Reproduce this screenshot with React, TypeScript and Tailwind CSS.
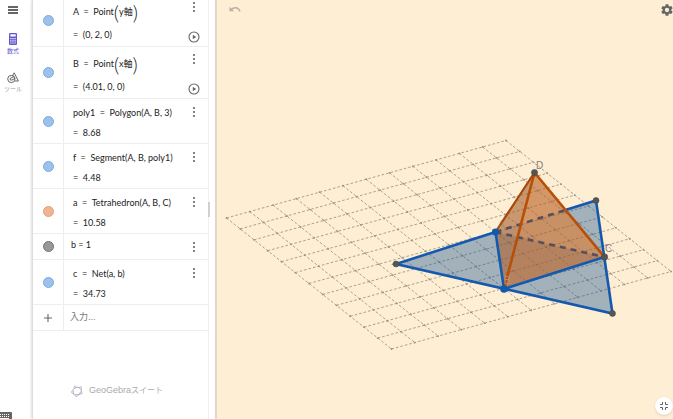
import type { ReactNode } from "react";
import clsx from "clsx";

type Row = {
	id: string;
	definition: ReactNode;
	value?: string;
	marble: string;
	tall?: boolean;
};

const BLUE = "bg-[#9bc2ea] border-[#7fabdc]";
const ORANGE = "bg-[#f0b492] border-[#e3a17c]";
const GRAY = "bg-[#989898] border-[#747474]";

function AxisPoint({ name, axis }: { name: string; axis: string }) {
	return (
		<span className="flex items-center whitespace-pre">
			<span>{name}  =  Point</span>
			<span className="text-xl leading-5 font-light">(</span>
			<span>{axis}</span>
			<span className="text-xl leading-5 font-light">)</span>
		</span>
	);
}

const rows: Row[] = [
	{ id: "A", definition: <AxisPoint name="A" axis="y軸" />, value: "(0, 2, 0)", marble: BLUE, tall: true },
	{ id: "B", definition: <AxisPoint name="B" axis="x軸" />, value: "(4.01, 0, 0)", marble: BLUE, tall: true },
	{ id: "poly1", definition: "poly1  =  Polygon(A, B, 3)", value: "8.68", marble: BLUE },
	{ id: "f", definition: "f  =  Segment(A, B, poly1)", value: "4.48", marble: BLUE },
	{ id: "a", definition: "a  =  Tetrahedron(A, B, C)", value: "10.58", marble: ORANGE },
	{ id: "b", definition: "b = 1", marble: GRAY },
	{ id: "c", definition: "c  =  Net(a, b)", value: "34.73", marble: BLUE },
];

function MoreIcon() {
	return (
		<svg width="4" height="12" viewBox="0 0 4 12" fill="#666">
			<circle cx="2" cy="2" r="1.1" />
			<circle cx="2" cy="6" r="1.1" />
			<circle cx="2" cy="10" r="1.1" />
		</svg>
	);
}

function PlayIcon() {
	return (
		<svg width="12" height="12" viewBox="0 0 12 12">
			<circle cx="6" cy="6" r="5" fill="none" stroke="#666" strokeWidth="1.1" />
			<path d="M4.8 3.7 8.2 6 4.8 8.3Z" fill="#666" />
		</svg>
	);
}

function AlgebraRow({ row }: { row: Row }) {
	return (
		<li
			className={clsx(
				"flex border-b border-[#eee]",
				row.tall ? "h-[52px]" : row.value ? "h-[45px]" : "h-[26px]"
			)}
		>
			<div className="flex w-[31px] shrink-0 items-center justify-center border-r border-[#eee]">
				<button aria-label={`${row.id} の表示切替`} className={clsx("size-[11px] rounded-full border", row.marble)} />
			</div>
			<div
				className={clsx(
					"flex min-w-0 grow flex-col whitespace-pre",
					row.value ? "pl-[9px]" : "pl-[7px]",
					row.tall ? "pt-[5px]" : row.value ? "pt-1" : "pt-px"
				)}
			>
				<div className={clsx("flex items-center", row.tall ? "h-6" : "h-5")}>{row.definition}</div>
				{row.value && (
					<div className={clsx("flex items-center", row.tall ? "h-[22px]" : "h-5")}>{`=  ${row.value}`}</div>
				)}
			</div>
			<div
				className={clsx(
					"flex w-7 shrink-0 flex-col items-center",
					row.tall ? "gap-[18px] pt-1.5" : "pt-[7px]"
				)}
			>
				<button aria-label="メニュー">
					<MoreIcon />
				</button>
				{row.tall && (
					<button aria-label="再生">
						<PlayIcon />
					</button>
				)}
			</div>
		</li>
	);
}

function Sidebar() {
	return (
		<nav className="flex w-8 shrink-0 flex-col bg-white">
			<div className="flex grow flex-col items-center pr-1.5 pt-1.5">
				<button aria-label="メニュー">
					<svg width="10" height="8" viewBox="0 0 10 8" stroke="#333" strokeWidth="1.4">
						<path d="M0 1h10M0 4h10M0 7h10" />
					</svg>
				</button>
				<button className="mt-[19px] flex flex-col items-center text-[#6557d2]">
					<svg width="8" height="12" viewBox="0 0 8 12">
						<rect width="8" height="12" rx="1" fill="currentColor" />
						<path d="M1.3 1.3h5.4v2.2H1.3z" fill="#fff" />
						<path
							d="M1.3 5h1.2v1.2H1.3zM3.4 5h1.2v1.2H3.4zM5.5 5h1.2v1.2H5.5zM1.3 7.2h1.2v1.2H1.3zM3.4 7.2h1.2v1.2H3.4zM5.5 7.2h1.2v1.2H5.5zM1.3 9.4h1.2v1.2H1.3zM3.4 9.4h1.2v1.2H3.4zM5.5 9.4h1.2v1.2H5.5z"
							fill="#fff"
						/>
					</svg>
					<span className="mt-0.5 text-[6px] leading-2">数式</span>
				</button>
				<button className="mt-[17px] flex flex-col items-center text-[#999]">
					<svg width="12" height="12" viewBox="0 0 12 12" fill="none" stroke="#666" strokeWidth="1">
						<circle cx="4.3" cy="7" r="3.6" />
						<path d="M7.2.8 11.4 9H7.9M7.2.8 5.4 4M3.3 8V6.3L7.4 4.4M3.3 8H5L8.4 6.2" />
					</svg>
					<span className="mt-px text-[6px] leading-2">ツール</span>
				</button>
			</div>
			<button aria-label="キーボード" className="h-[7px] w-3">
				<svg width="12" height="7" viewBox="0 0 12 7">
					<path d="M0 0h11q1 0 1 1v6H0z" fill="#666" />
					<path d="M0 2h1v1H0zM2 2h1v1H2zM4 2h1v1H4zM6 2h1v1H6zM8 2h1v1H8zM0 4h1v1H0zM2 4h1v1H2zM4 4h1v1H4zM6 4h1v1H6zM8 4h1v1H8zM0 6h9v1H0z" fill="#fff" />
				</svg>
			</button>
		</nav>
	);
}

function AlgebraView() {
	return (
		<section className="relative z-10 flex w-[183px] shrink-0 flex-col overflow-hidden border-l border-[#ddd] bg-white pr-1.5 shadow-[-1px_0_2px_rgba(0,0,0,0.12)]">
			<ul className="-mt-[5px] border-r border-[#f0f0f0] font-['Lato','Noto_Sans_CJK_JP',sans-serif] text-[9px] text-[#222]">
				{rows.map((row) => (
					<AlgebraRow key={row.id} row={row} />
				))}
			</ul>
			<div className="flex h-[26px] border-r border-b border-[#eee]">
				<button aria-label="追加" className="flex w-[31px] shrink-0 items-center justify-center border-r border-[#eee]">
					<svg width="8" height="8" viewBox="0 0 8 8" stroke="#666" strokeWidth="1.1">
						<path d="M4 0v8M0 4h8" />
					</svg>
				</button>
				<input
					aria-label="入力"
					placeholder="入力..."
					className="min-w-0 grow pl-1.5 text-[9px] outline-none placeholder:text-[#777]"
				/>
			</div>
			<div className="flex grow items-end border-r border-[#f0f0f0] pb-5 pl-[38px]">
				<button className="flex items-center gap-1.5 text-[9px] leading-4 text-[#aaa]">
					<svg width="12" height="12" viewBox="0 0 12 12" stroke="#aaabb8">
						<ellipse cx="6" cy="6.2" rx="4.4" ry="3.8" fill="none" strokeWidth="1" transform="rotate(-20 6 6)" />
						<g fill="#fff" strokeWidth=".8">
							<circle cx="4" cy="2.2" r="1.1" />
							<circle cx="9.6" cy="2.7" r="1.1" />
							<circle cx="1.6" cy="7" r="1.1" />
							<circle cx="10" cy="8" r="1.1" />
							<circle cx="5.2" cy="10.4" r="1.1" />
						</g>
					</svg>
					<span>
						GeoGebra<span className="text-[8px]">スイート</span>
					</span>
				</button>
			</div>
			<div className="absolute top-[202px] right-[5px] h-[15px] w-0.5 bg-[#d0d0d0]" />
		</section>
	);
}

const CELLS = 12;
const LEFT = [226.5, 218];
const TOP = [506, 140.5];
const BOTTOM = [391.5, 349];

function gridPoint(u: number, v: number) {
	return [
		LEFT[0] + ((TOP[0] - LEFT[0]) * u + (BOTTOM[0] - LEFT[0]) * v) / CELLS,
		LEFT[1] + ((TOP[1] - LEFT[1]) * u + (BOTTOM[1] - LEFT[1]) * v) / CELLS,
	];
}

const steps = Array.from({ length: CELLS + 1 }, (_, i) => i);
const gridPath = steps
	.map((i) => `M${gridPoint(i, 0)}L${gridPoint(i, CELLS)}M${gridPoint(0, i)}L${gridPoint(CELLS, i)}`)
	.join("");

function Scene() {
	return (
		<svg
			className="block h-full w-full font-['Liberation_Sans',sans-serif]"
			viewBox="217 0 456 419"
			role="img"
			aria-label="正四面体と展開図"
		>
			<path d={gridPath} fill="none" stroke="#aaa18f" strokeWidth="1" strokeDasharray="2.6 2" />
			<g fill="#999181">
				{steps.map((u) =>
					steps.map((v) => {
						const [x, y] = gridPoint(u, v);
						return <circle key={`${u}-${v}`} cx={x} cy={y} r=".9" />;
					})
				)}
			</g>

			{/* net */}
			<g fill="#1c5597" fillOpacity=".4">
				<path d="M396 264 495.5 232 504 289Z" />
				<path d="M504 289 604.5 257 612.5 313.5Z" />
				<path d="M565.2 210 596 200.5 604.5 257Z" />
				<path d="M495.5 232 565.2 210 604.5 257Z" fillOpacity=".12" />
				<path d="M495.5 232 604.5 257 504 289Z" fillOpacity=".34" />
			</g>

			{/* tetrahedron */}
			<path d="M534.5 172.5 495.5 232 504 289Z" fill="#a0531f" fillOpacity=".56" />
			<path d="M534.5 172.5 504 289 604.5 257Z" fill="#b55d20" fillOpacity=".6" />

			<g fill="none" stroke="#1359ae" strokeWidth="2.6" strokeLinecap="round">
				<path d="M495.5 232 396 264 612.5 313.5 596 200.5 567 209.6" />
				<path d="M495.5 232 504 289 604.5 257" />
			</g>
			<g fill="none" stroke="#574f60" strokeWidth="2.6" strokeDasharray="6 5">
				<path d="M495.5 232 567 209.6" />
				<path d="M495.5 232 604.5 257" />
			</g>
			<g fill="none" stroke="#b84f06" strokeWidth="2.6" strokeLinecap="round">
				<path d="M534.5 172.5 604.5 257" />
				<path d="M534.5 172.5 504 289" />
				<path d="M534.5 172.5 495.5 232" stroke="#a34a0c" strokeWidth="2.2" />
			</g>

			<g fontSize="10" fill="#858078">
				<text x="536" y="169">D</text>
				<text x="605" y="252">C</text>
				<text x="498" y="228" fillOpacity=".45">A</text>
				<text x="504" y="284" fill="#d09a80" fillOpacity=".7">B</text>
			</g>

			<g fill="#555" stroke="#444" strokeWidth=".5">
				<circle cx="534.5" cy="172.5" r="3.1" />
				<circle cx="396" cy="264" r="3" />
				<circle cx="596" cy="200.5" r="3" />
				<circle cx="604.5" cy="257" r="3.3" />
				<circle cx="612.5" cy="313.5" r="3" />
			</g>
			<g fill="#1359ae">
				<circle cx="495.5" cy="232" r="3.6" />
				<circle cx="504" cy="289" r="3.8" />
			</g>
		</svg>
	);
}

function GraphicsView() {
	return (
		<main className="relative min-w-0 grow bg-[#feeed4]">
			<Scene />
			<button aria-label="元に戻す" className="absolute top-1.5 left-3">
				<svg width="12" height="7" viewBox="0 0 12 7">
					<path d="M2.3 3.4C5.2.7 9.5 1 11 5.6" fill="none" stroke="#b9b1a3" strokeWidth="1.5" />
					<path d="M.5.8v4.5H5Z" fill="#b9b1a3" />
				</svg>
			</button>
			<button aria-label="設定" className="absolute top-1 right-0">
				<svg width="12" height="12" viewBox="2 2 20 20" fill="#666">
					<path d="M19.14 12.94c.04-.3.06-.61.06-.94s-.02-.64-.07-.94l2.03-1.58a.49.49 0 0 0 .12-.61l-1.92-3.32a.49.49 0 0 0-.59-.22l-2.39.96a7 7 0 0 0-1.62-.94l-.36-2.54A.48.48 0 0 0 13.92 2.4h-3.84a.48.48 0 0 0-.48.41l-.36 2.54c-.59.24-1.13.57-1.62.94l-2.39-.96a.49.49 0 0 0-.59.22L2.72 8.87a.48.48 0 0 0 .12.61l2.03 1.58a7 7 0 0 0 0 1.88l-2.03 1.58a.49.49 0 0 0-.12.61l1.92 3.32c.12.22.37.29.59.22l2.39-.96c.5.38 1.03.7 1.62.94l.36 2.54c.05.24.24.41.48.41h3.84c.24 0 .44-.17.47-.41l.36-2.54c.59-.24 1.13-.56 1.62-.94l2.39.96c.22.08.47 0 .59-.22l1.92-3.32a.48.48 0 0 0-.12-.61zM12 15.6a3.6 3.6 0 1 1 0-7.2 3.6 3.6 0 0 1 0 7.2Z" />
				</svg>
			</button>
			<button
				aria-label="全画面表示の終了"
				className="absolute right-0 bottom-1 flex size-[18px] items-center justify-center rounded-full bg-white shadow"
			>
				<svg width="8" height="8" viewBox="0 0 8 8" fill="none" stroke="#666" strokeWidth="1">
					<path d="M0 2.5h2.5V0M5.5 0v2.5H8M8 5.5H5.5V8M2.5 8V5.5H0" />
				</svg>
			</button>
		</main>
	);
}

export default function App() {
	return (
		<div className="flex h-screen overflow-hidden bg-white font-['Liberation_Sans','Noto_Sans_CJK_JP',sans-serif]">
			<Sidebar />
			<AlgebraView />
			<div className="w-0.5 shrink-0 bg-[#e0dace]" />
			<GraphicsView />
		</div>
	);
}
